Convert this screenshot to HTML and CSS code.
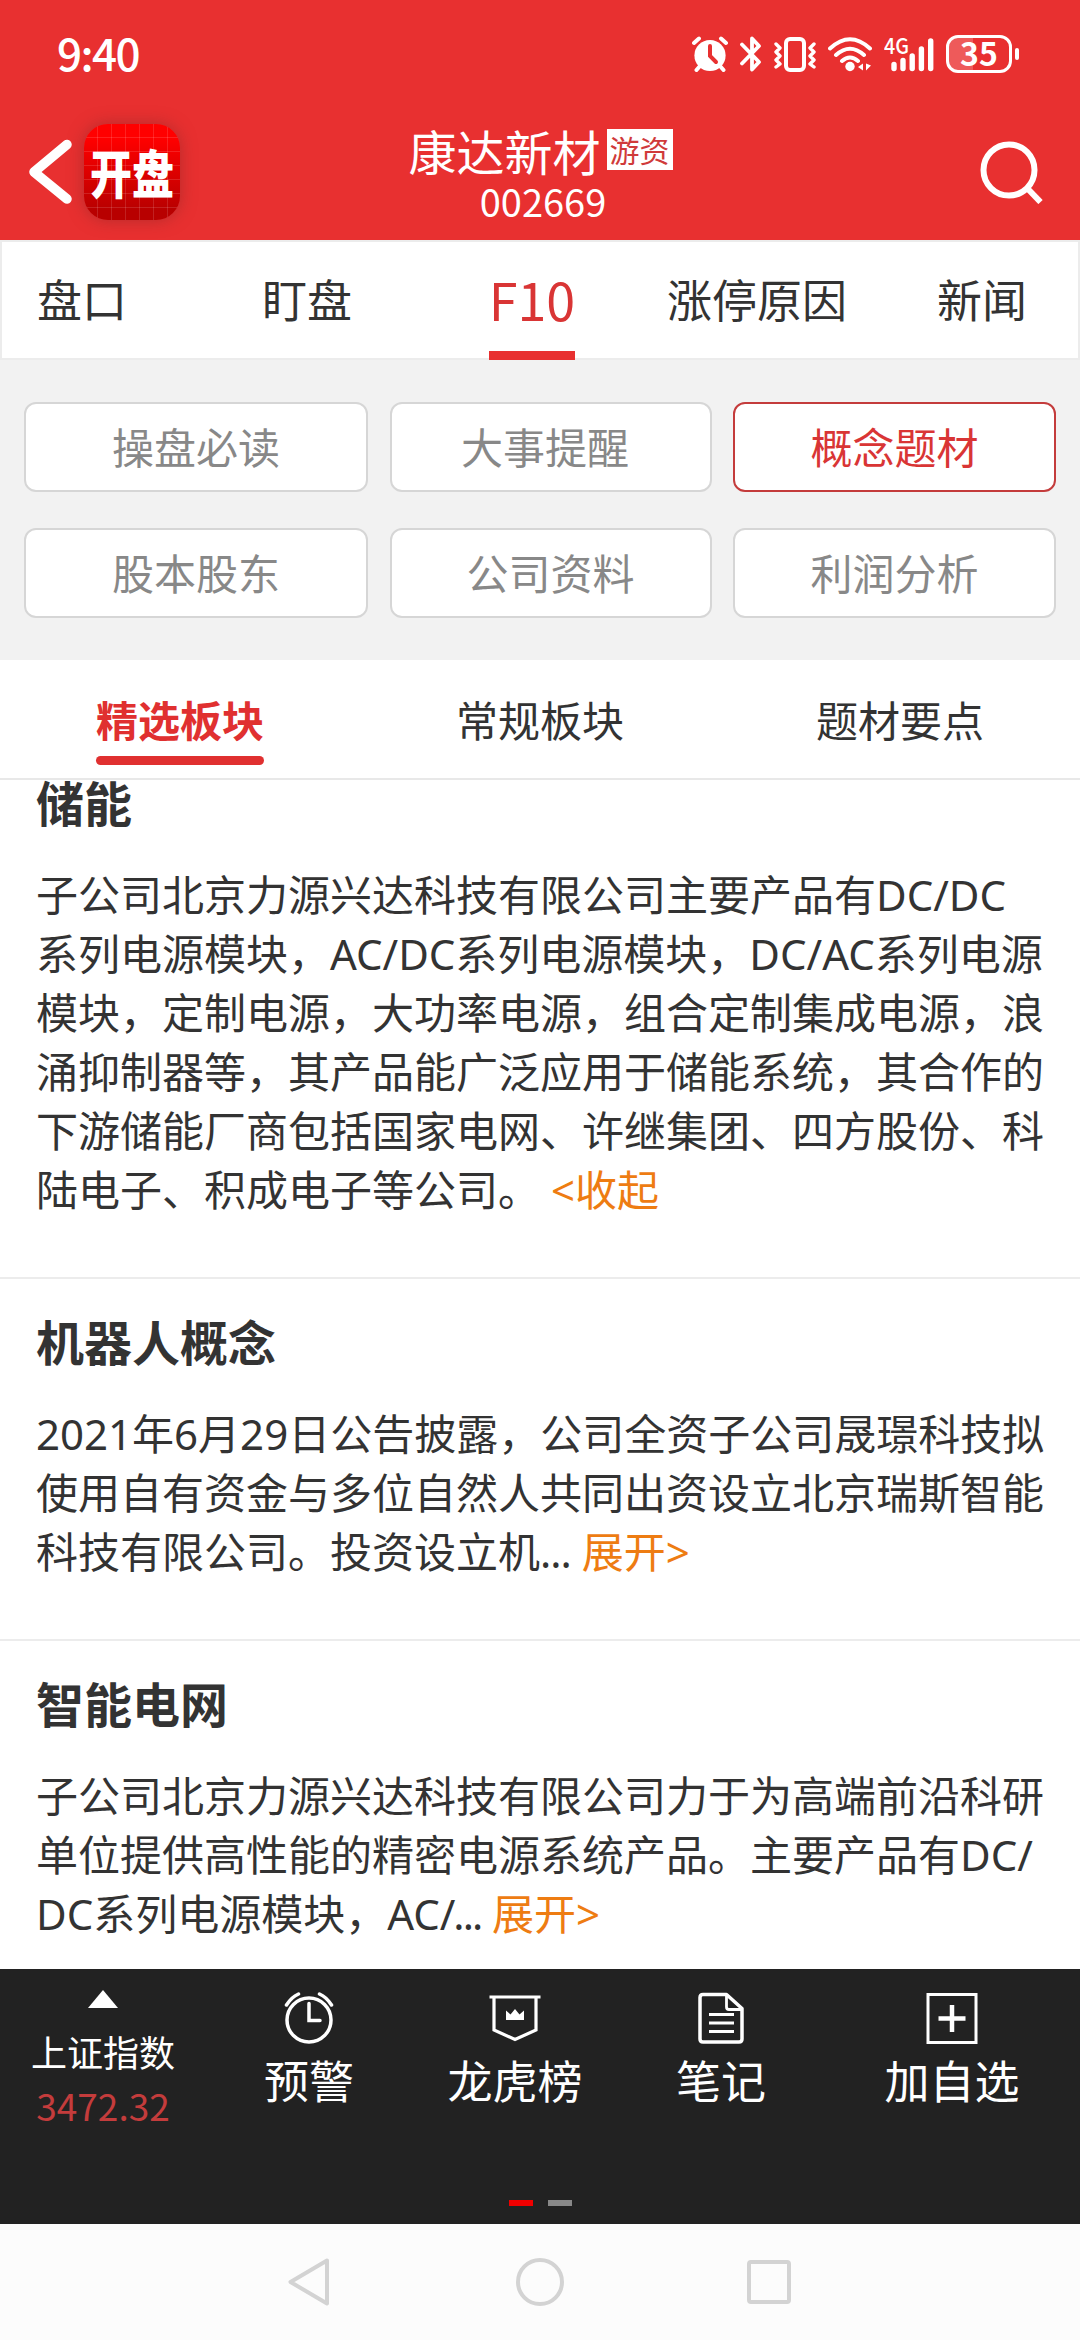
FILE: index.html
```
<!DOCTYPE html>
<html lang="zh-CN">

<head>
    <meta charset="UTF-8">
    <meta name="viewport" content="width=device-width, initial-scale=1.0">
    <title>康达新材 002669</title>
    <link rel="stylesheet" href="styles.css">
</head>

<body>
    <header class="header">
        <div class="status-bar">
            <span class="clock">9:40</span>
            <div class="status-icons">
                <svg class="icon-alarm" width="36" height="36" viewBox="0 0 36 36">
                    <circle cx="18" cy="19.5" r="15.6" fill="#fff" />
                    <path d="M2 7l5-4.500M34 7l-5-4.500M8 30l-3.500 4M28 30l3.500 4" stroke="#fff" stroke-width="4" stroke-linecap="round" fill="none" />
                    <path d="M18 10v10l6 6" stroke="#e83030" stroke-width="4" stroke-linecap="round" fill="none" />
                </svg>
                <svg class="icon-bluetooth" width="22" height="36" viewBox="0 0 22 36">
                    <path d="M2 8.500l17 17.500-7 7.500V2.500l7 7.500L2 27.500" stroke="#fff" stroke-width="3.800" stroke-linecap="round" stroke-linejoin="round" fill="none" />
                </svg>
                <svg class="icon-vibrate" width="42" height="36" viewBox="0 0 42 36">
                    <rect x="12" y="3" width="18" height="31" rx="4" stroke="#fff" stroke-width="4" fill="none" />
                    <path d="M2 8l4 4-4 4 4 4-4 4 4 4-4 3M40 8l-4 4 4 4-4 4 4 4-4 4 4 3" stroke="#fff" stroke-width="3.400" stroke-linecap="round" stroke-linejoin="round" fill="none" />
                </svg>
                <svg class="icon-wifi" width="44" height="36" viewBox="0 0 44 36">
                    <path d="M2 12.500q20-18.500 40 0M8 19q14-12.500 28 0M14 25q8-7 16 0" stroke="#fff" stroke-width="4" stroke-linecap="round" fill="none" />
                    <circle cx="22" cy="30.500" r="4.700" fill="#fff" />
                    <path d="M35 27.500v7l-5-3.500zM38 27.500v7l5-5z" fill="#fff" />
                </svg>
                <svg class="icon-signal" width="50" height="36" viewBox="0 0 50 36">
                    <text class="signal-label" x="0" y="18" textLength="25" lengthAdjust="spacingAndGlyphs">4G</text>
                    <path d="M10 28.500v4M19 24.500v8M28.200 20v12.500M37.400 13v19.500M46.700 5v27.500" stroke="#fff" stroke-width="5.400" stroke-linecap="round" />
                </svg>
                <div class="battery"><span>35</span></div>
            </div>
        </div>
        <div class="title-bar">
            <div class="title-left">
                <svg width="44" height="66" viewBox="0 0 44 66">
                    <path d="M38 5.500L5 33l33 27" stroke="#fff" stroke-width="9.500" stroke-linecap="round" stroke-linejoin="round" fill="none" />
                </svg>
                <div class="logo"><span>开盘</span></div>
            </div>
            <div class="title-center">
                <div class="stock-name">康达新材<span class="tag">游资</span></div>
                <div class="stock-code">002669</div>
            </div>
            <svg class="search" width="64" height="64" viewBox="0 0 64 64">
                <circle cx="29" cy="30" r="25.500" stroke="#fff" stroke-width="6" fill="none" />
                <path d="M47 48l13.500 14" stroke="#fff" stroke-width="6" />
            </svg>
        </div>
    </header>

    <nav class="tabs">
        <div class="tab">盘口</div>
        <div class="tab">盯盘</div>
        <div class="tab active">F10</div>
        <div class="tab">涨停原因</div>
        <div class="tab">新闻</div>
    </nav>

    <div class="chips">
        <div class="chip">操盘必读</div>
        <div class="chip has-news">大事提醒</div>
        <div class="chip active">概念题材</div>
        <div class="chip">股本股东</div>
        <div class="chip">公司资料</div>
        <div class="chip">利润分析</div>
    </div>

    <nav class="sub-tabs">
        <div class="sub-tab active"><span>精选板块</span></div>
        <div class="sub-tab"><span>常规板块</span></div>
        <div class="sub-tab"><span>题材要点</span></div>
    </nav>

    <main class="content">
        <section class="topic scrolled">
            <h2>储能</h2>
            <p>
                子公司北京力源兴达科技有限公司主要产品有DC/DC<br>
                系列电源模块，AC/DC系列电源模块，DC/AC系列电源<br>
                模块，定制电源，大功率电源，组合定制集成电源，浪<br>
                涌抑制器等，其产品能广泛应用于储能系统，其合作的<br>
                下游储能厂商包括国家电网、许继集团、四方股份、科<br>
                陆电子、积成电子等公司。 <span class="toggle">&lt;收起</span>
            </p>
        </section>
        <section class="topic">
            <h2>机器人概念</h2>
            <p>
                2021年6月29日公告披露，公司全资子公司晟璟科技拟<br>
                使用自有资金与多位自然人共同出资设立北京瑞斯智能<br>
                科技有限公司。投资设立机<span class="more">...</span> <span class="toggle">展开&gt;</span>
            </p>
        </section>
        <section class="topic">
            <h2>智能电网</h2>
            <p>
                子公司北京力源兴达科技有限公司力于为高端前沿科研<br>
                单位提供高性能的精密电源系统产品。主要产品有DC/<br>
                DC系列电源模块，AC<span class="more tight">/...</span> <span class="toggle">展开&gt;</span>
            </p>
        </section>
    </main>

    <footer class="toolbar">
        <div class="tools">
            <div class="index">
                <svg width="30" height="18" viewBox="0 0 30 18">
                    <path d="M15 0l15 18H0z" fill="#fff" />
                </svg>
                <span class="index-name">上证指数</span>
                <span class="index-value">3472.32</span>
            </div>
            <div class="tool">
                <svg width="52" height="52" viewBox="0 0 52 52">
                    <g stroke="#fff" fill="none" stroke-width="3.500" stroke-linecap="round">
                        <circle cx="26" cy="28" r="22" />
                        <path d="M26 11.500V28.500h11M3.500 13q5-8 12-11M48.500 13q-5-8-12-11" />
                    </g>
                </svg>
                <span>预警</span>
            </div>
            <div class="tool">
                <svg width="52" height="52" viewBox="0 0 52 52">
                    <path d="M0.500 5h51M5 5v33l21 9.500L47 38V5" stroke="#fff" stroke-width="3.200" fill="none" />
                    <path d="M17 18.500l4.500 4L26 17l4.500 5.500 4.500-4V28H17z" fill="#fff" />
                </svg>
                <span>龙虎榜</span>
            </div>
            <div class="tool">
                <svg width="52" height="52" viewBox="0 0 52 52">
                    <g stroke="#fff" fill="none" stroke-width="3.500" stroke-linejoin="round">
                        <path d="M8 2.500h23.500L47 16.500V47q0 3-3 3H8q-3 0-3-3V5.500q0-3 3-3z" />
                        <path d="M31.500 3v12q0 2.500 2.500 2.500h13" stroke-width="2.800" />
                        <path d="M14 22.500h25M14 31h25M14 39.500h25" stroke-width="3" />
                    </g>
                </svg>
                <span>笔记</span>
            </div>
            <div class="tool">
                <svg width="52" height="52" viewBox="0 0 52 52">
                    <rect x="2" y="2.500" width="48" height="48" stroke="#fff" stroke-width="3" fill="none" />
                    <path d="M26 13v27M12.500 26.500h27" stroke="#fff" stroke-width="4.500" />
                </svg>
                <span>加自选</span>
            </div>
        </div>
        <div class="pager">
            <i class="dot current"></i>
            <i class="dot"></i>
        </div>
    </footer>

    <div class="system-nav">
        <svg width="48" height="48" viewBox="0 0 48 48">
            <path d="M40 2.500L3.500 24 40 45.500z" />
        </svg>
        <svg width="48" height="48" viewBox="0 0 48 48">
            <circle cx="24" cy="24" r="22" />
        </svg>
        <svg width="48" height="48" viewBox="0 0 48 48">
            <rect x="4" y="4" width="40" height="40" rx="2" />
        </svg>
    </div>
</body>

</html>
```
FILE: styles.css
```
* {
    box-sizing: border-box;
}

body {
    margin: 0;
    width: 1080px;
    height: 2340px;
    display: flex;
    flex-direction: column;
    overflow: hidden;
    background-color: #fff;
    color: #333;
    font-family: "Noto Sans CJK SC", "Noto Sans", sans-serif;
}

svg {
    display: block;
    flex: none;
}

/* Header */
.header {
    height: 240px;
    flex: none;
    background-color: #e83030;
    color: #fff;
}

.status-bar {
    height: 108px;
    padding: 0 61px 0 57px;
    display: flex;
    justify-content: space-between;
    align-items: center;
}

.clock {
    padding-bottom: 4px;
    font-size: 44px;
    font-weight: 500;
    line-height: 60px;
    letter-spacing: -1.6px;
}

.status-icons {
    display: flex;
    align-items: center;
}

.icon-bluetooth {
    margin-left: 12px;
}

.icon-vibrate {
    margin-left: 12px;
}

.icon-wifi {
    margin-left: 12px;
}

.icon-signal {
    margin-left: 12px;
}

.signal-label {
    font-size: 22px;
    font-weight: 500;
    fill: #fff;
}

.battery {
    position: relative;
    width: 66px;
    height: 38px;
    margin-left: 12px;
    margin-right: 7px;
    border: 3px solid #fff;
    border-radius: 12px;
    background: linear-gradient(to right, #ee5a5a 40%, transparent 40%);
    font-size: 32px;
    font-weight: 700;
    line-height: 29px;
    text-align: center;
}

/* Battery tip */
.battery::after {
    content: "";
    position: absolute;
    right: -10px;
    top: 10px;
    width: 4px;
    height: 12px;
    border-radius: 2px;
    background-color: #fff;
}

.title-bar {
    height: 132px;
    padding: 0 36px 0 29px;
    display: grid;
    grid-template-columns: 200px 1fr 192px;
    align-items: center;
}

.title-left {
    display: flex;
    align-items: center;
    gap: 11px;
    margin-top: -4px;
}

.logo {
    width: 96px;
    height: 96px;
    display: flex;
    align-items: center;
    justify-content: center;
    padding-bottom: 3px;
    border-radius: 24px;
    background:
        repeating-linear-gradient(to right, transparent 0 13px, rgba(255, 255, 255, 0.13) 13px 14px),
        repeating-linear-gradient(to bottom, transparent 0 13px, rgba(255, 255, 255, 0.13) 13px 14px),
        linear-gradient(#ff0000 15%, #b80000 90%);
    box-shadow: 0 0 16px rgba(130, 40, 40, 0.5);
}

.logo span {
    font-size: 42px;
    font-weight: 900;
    line-height: 50px;
    transform: scaleY(1.25);
}

.title-center {
    padding-bottom: 3px;
    text-align: center;
}

.stock-name {
    display: flex;
    justify-content: center;
    align-items: center;
    font-size: 48px;
    line-height: 56px;
}

.tag {
    margin-left: 6px;
    padding: 0 3px;
    background-color: #fff;
    color: #d03a3a;
    font-size: 30px;
    line-height: 41px;
}

.stock-code {
    padding-left: 5px;
    font-size: 38px;
    line-height: 46px;
}

.search {
    justify-self: end;
    margin-top: -5px;
}

/* Main tabs */
.tabs {
    height: 120px;
    flex: none;
    display: grid;
    grid-template-columns: repeat(5, 225px);
    justify-content: center;
    justify-items: center;
    padding-right: 16px;
    border: 2px solid #ececec;
    font-size: 45px;
    line-height: 114px;
}

.tab.active {
    height: 118px;
    border-bottom: 9px solid #e83030;
    color: #d93535;
    font-size: 52px;
}

/* Category chips */
.chips {
    height: 300px;
    flex: none;
    display: grid;
    grid-template-columns: 344px 322px 323px;
    grid-auto-rows: 90px;
    gap: 36px 21.5px;
    padding: 42px 24px;
    background-color: #f2f2f2;
}

.chip {
    border: 2px solid #d6d6d6;
    border-radius: 12px;
    background-color: #fff;
    color: #888;
    font-size: 42px;
    line-height: 83px;
    text-align: center;
}

.chip.has-news {
    padding-right: 11px;
}

.chip.active {
    border-color: #c43c3c;
    color: #d93535;
}

/* Sub tabs */
.sub-tabs {
    height: 120px;
    flex: none;
    display: grid;
    grid-template-columns: repeat(3, 1fr);
    justify-items: center;
    border-bottom: 2px solid #e8e8e8;
    font-size: 42px;
    line-height: 117px;
}

.sub-tab {
    position: relative;
}

.sub-tab.active {
    color: #e03030;
    font-weight: 700;
}

.sub-tab.active::after {
    content: "";
    position: absolute;
    left: 0;
    right: 0;
    bottom: 13px;
    height: 9px;
    border-radius: 5px;
    background-color: #e03030;
}

/* Topics */
.content {
    flex: 1;
    min-height: 0;
    overflow: hidden;
}

.topic {
    padding: 0 36px 58px;
    border-bottom: 2px solid #ececec;
}

.topic.scrolled {
    margin-top: -40px;
}

.topic h2 {
    margin: 0;
    padding: 26px 0 28px;
    font-size: 48px;
    line-height: 71px;
}

.topic p {
    margin: 0;
    font-family: "Noto Sans", "Noto Sans CJK SC", sans-serif;
    font-size: 42px;
    line-height: 59px;
    white-space: nowrap;
}

.more {
    letter-spacing: -1px;
}

.more.tight {
    letter-spacing: -2px;
}

.toggle {
    color: #ee7c12;
}

/* Bottom toolbar */
.toolbar {
    height: 255px;
    flex: none;
    display: flex;
    flex-direction: column;
    justify-content: space-between;
    padding-bottom: 18px;
    background-color: #222;
    color: #fff;
}

.tools {
    display: grid;
    grid-template-columns: repeat(4, 206px) 1fr;
}

.index,
.tool {
    display: flex;
    flex-direction: column;
    align-items: center;
}

.index {
    padding-top: 21px;
}

.index-name {
    margin-top: 16px;
    font-size: 36px;
    line-height: 54px;
}

.index-value {
    color: #c43c3c;
    font-size: 37px;
    line-height: 54px;
}

.tool {
    padding-top: 23px;
    font-size: 45px;
    line-height: 71px;
}

.pager {
    display: flex;
    justify-content: center;
    gap: 15px;
}

.dot {
    width: 24px;
    height: 6px;
    background-color: #888;
}

.dot.current {
    background-color: #f00000;
}

/* System navigation */
.system-nav {
    height: 116px;
    flex: none;
    display: flex;
    justify-content: center;
    align-items: center;
    gap: 181px;
    background-color: #fcfcfc;
}

.system-nav svg {
    fill: none;
    stroke: #d3d3d3;
    stroke-width: 4;
    stroke-linejoin: round;
}
```
